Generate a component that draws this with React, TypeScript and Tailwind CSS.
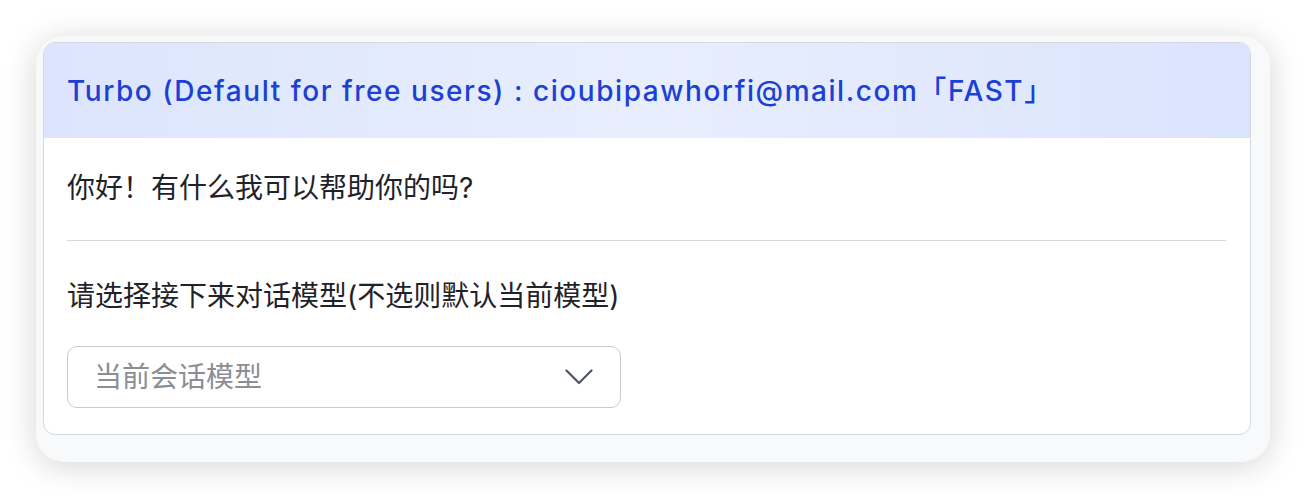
import React from 'react';

const ChevronDown: React.FC = () => (
  <svg width="28" height="16" viewBox="0 0 28 16" fill="none" className="text-[#4b5563]">
    <path d="M1.5 1.5 L14 14 L26.5 1.5" stroke="currentColor" strokeWidth="2.2" strokeLinecap="round" strokeLinejoin="round" />
  </svg>
);

const App: React.FC = () => {
  return (
    <div className="w-[1306px] h-[498px] bg-white pt-[36px] pl-[36px] font-['Inter','Noto_Sans_CJK_SC',sans-serif]">
      <div className="w-[1234px] h-[426px] bg-[#f8f9fb] rounded-[28px] shadow-[0_4px_32px_rgba(0,0,0,0.17)] pt-[6px] pl-[7px] pr-[19px] pb-[27px]">
        <div className="h-full bg-white border border-[#d5d7dd] rounded-[12px] overflow-hidden flex flex-col">
          {/* Model header */}
          <div className="h-[95px] shrink-0 flex items-center px-[23px] bg-gradient-to-r from-[#dce5fd] via-[#e8eefd] to-[#dbe4fd]">
            <span className="text-[28px] leading-none font-medium tracking-[1.55px] text-[#1c40d4] whitespace-nowrap">
              Turbo (Default for free users) : cioubipawhorfi@mail.com「FAST」
            </span>
          </div>

          <div className="flex-1 px-[23px] pt-[30px]">
            <p className="text-[28px] leading-[40px] text-[#1f2329]">你好！有什么我可以帮助你的吗?</p>

            <div className="mt-[32px] h-px bg-[#d6d8dc] mr-[1px]"></div>

            <p className="mt-[35px] text-[28px] leading-[40px] text-[#1f2329]">请选择接下来对话模型(不选则默认当前模型)</p>

            <div className="mt-[30px] w-[554px] h-[62px] border border-[#c8cbd0] rounded-[10px] flex items-center justify-between pl-[26px] pr-[27px]">
              <span className="text-[28px] text-[#8b8e94]">当前会话模型</span>
              <ChevronDown />
            </div>
          </div>
        </div>
      </div>
    </div>
  );
};

export default App;
